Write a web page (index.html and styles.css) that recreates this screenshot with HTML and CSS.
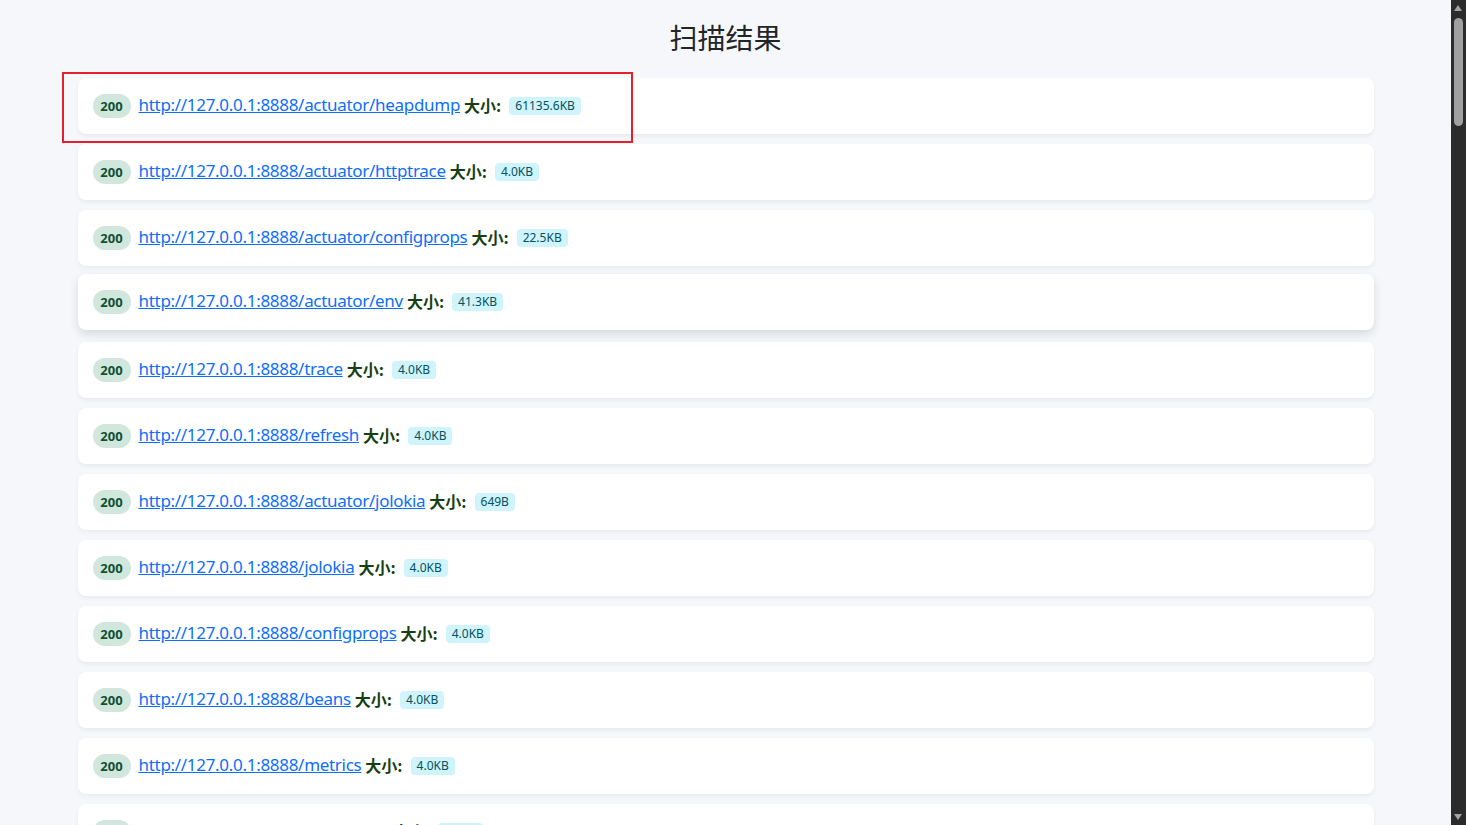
FILE: index.html
```html
<!DOCTYPE html>
<html lang="zh-CN">
<head>
<meta charset="utf-8">
<title>扫描结果</title>
<link rel="stylesheet" href="styles.css">
</head>
<body>
<div class="page">
  <div class="container">
    <h3 class="page-title">扫描结果</h3>
    <div class="results">
      <div class="result-card">
        <span class="status">200</span>
        <a class="url" href="#">http://127.0.0.1:8888/actuator/heapdump</a>
        <span class="size-label">大小:</span>
        <span class="size">61135.6KB</span>
        <div class="highlight-box"></div>
      </div>
      <div class="result-card">
        <span class="status">200</span>
        <a class="url" href="#">http://127.0.0.1:8888/actuator/httptrace</a>
        <span class="size-label">大小:</span>
        <span class="size">4.0KB</span>
      </div>
      <div class="result-card">
        <span class="status">200</span>
        <a class="url" href="#">http://127.0.0.1:8888/actuator/configprops</a>
        <span class="size-label">大小:</span>
        <span class="size">22.5KB</span>
      </div>
      <div class="result-card lifted">
        <span class="status">200</span>
        <a class="url" href="#">http://127.0.0.1:8888/actuator/env</a>
        <span class="size-label">大小:</span>
        <span class="size">41.3KB</span>
      </div>
      <div class="result-card">
        <span class="status">200</span>
        <a class="url" href="#">http://127.0.0.1:8888/trace</a>
        <span class="size-label">大小:</span>
        <span class="size">4.0KB</span>
      </div>
      <div class="result-card">
        <span class="status">200</span>
        <a class="url" href="#">http://127.0.0.1:8888/refresh</a>
        <span class="size-label">大小:</span>
        <span class="size">4.0KB</span>
      </div>
      <div class="result-card">
        <span class="status">200</span>
        <a class="url" href="#">http://127.0.0.1:8888/actuator/jolokia</a>
        <span class="size-label">大小:</span>
        <span class="size">649B</span>
      </div>
      <div class="result-card">
        <span class="status">200</span>
        <a class="url" href="#">http://127.0.0.1:8888/jolokia</a>
        <span class="size-label">大小:</span>
        <span class="size">4.0KB</span>
      </div>
      <div class="result-card">
        <span class="status">200</span>
        <a class="url" href="#">http://127.0.0.1:8888/configprops</a>
        <span class="size-label">大小:</span>
        <span class="size">4.0KB</span>
      </div>
      <div class="result-card">
        <span class="status">200</span>
        <a class="url" href="#">http://127.0.0.1:8888/beans</a>
        <span class="size-label">大小:</span>
        <span class="size">4.0KB</span>
      </div>
      <div class="result-card">
        <span class="status">200</span>
        <a class="url" href="#">http://127.0.0.1:8888/metrics</a>
        <span class="size-label">大小:</span>
        <span class="size">4.0KB</span>
      </div>
      <div class="result-card">
        <span class="status">200</span>
        <a class="url" href="#">http://127.0.0.1:8888/heapdump</a>
        <span class="size-label">大小:</span>
        <span class="size">4.0KB</span>
      </div>
    </div>
  </div>
</div>
<div class="scrollbar" aria-hidden="true">
  <span class="sb-arrow sb-up"></span>
  <span class="sb-thumb"></span>
  <span class="sb-arrow sb-down"></span>
</div>
</body>
</html>
```

FILE: styles.css
```css
html {
  background: #f5f7fb;
}
body {
  margin: 0;
  background: #f5f7fb;
  font-family: "Noto Sans", "Noto Sans CJK SC", sans-serif;
  color: #212529;
}
.page {
  margin-right: 15px;
}
.container {
  max-width: 1296px;
  margin: 0 auto;
  padding: 0 12px;
}
.page-title {
  margin: 0;
  padding-top: 20px;
  padding-bottom: 24px;
  text-align: center;
  font-family: "Noto Sans CJK SC", sans-serif;
  font-weight: 400;
  font-size: 28px;
  line-height: 34px;
  color: #212529;
}
.results {
  display: flex;
  flex-direction: column;
  gap: 10px;
  padding-bottom: 20px;
}
.result-card {
  position: relative;
  display: flex;
  align-items: center;
  height: 56px;
  box-sizing: border-box;
  padding: 0 15px;
  background: #ffffff;
  border-radius: 8px;
  box-shadow: 0 2px 4px rgba(0, 0, 0, 0.06);
}
.result-card.lifted {
  transform: translateY(-2px);
  box-shadow: 0 4px 10px rgba(0, 0, 0, 0.12);
}
.status {
  display: inline-flex;
  align-items: center;
  justify-content: center;
  width: 38px;
  height: 24px;
  border-radius: 12px;
  background: #d1e7dd;
  color: #0f5132;
  font-family: "Noto Sans", sans-serif;
  font-weight: 700;
  font-size: 13px;
  margin-right: 8px;
}
.url {
  color: #0d6efd;
  text-decoration: underline;
  font-size: 17px;
  font-family: "Noto Sans", sans-serif;
  letter-spacing: -0.3px;
  margin-bottom: 3px;
}
.size-label {
  margin-left: 4px;
  margin-bottom: 3px;
  color: #173f14;
  font-weight: 700;
  font-size: 16px;
  font-family: "Noto Sans CJK SC", sans-serif;
}
.size {
  margin-left: 8px;
  padding: 0 6px;
  height: 18px;
  line-height: 18px;
  border-radius: 4px;
  background: #cff4fc;
  color: #055160;
  font-family: "Noto Sans", sans-serif;
  font-size: 12px;
}
.highlight-box {
  position: absolute;
  left: -16px;
  top: -6px;
  width: 571px;
  height: 71px;
  box-sizing: border-box;
  border: 2px solid #e3202b;
  pointer-events: none;
}
.scrollbar {
  position: fixed;
  top: 0;
  right: 0;
  width: 15px;
  height: 100vh;
  background: #2b2b2b;
}
.sb-arrow {
  position: absolute;
  left: 3px;
  width: 0;
  height: 0;
  border-left: 4.5px solid transparent;
  border-right: 4.5px solid transparent;
}
.sb-up {
  top: 5px;
  border-bottom: 6px solid #a3a3a3;
}
.sb-down {
  bottom: 5px;
  border-top: 6px solid #a3a3a3;
}
.sb-thumb {
  position: absolute;
  left: 3px;
  top: 18px;
  width: 9px;
  height: 108px;
  border-radius: 5px;
  background: #a0a0a0;
}
```
